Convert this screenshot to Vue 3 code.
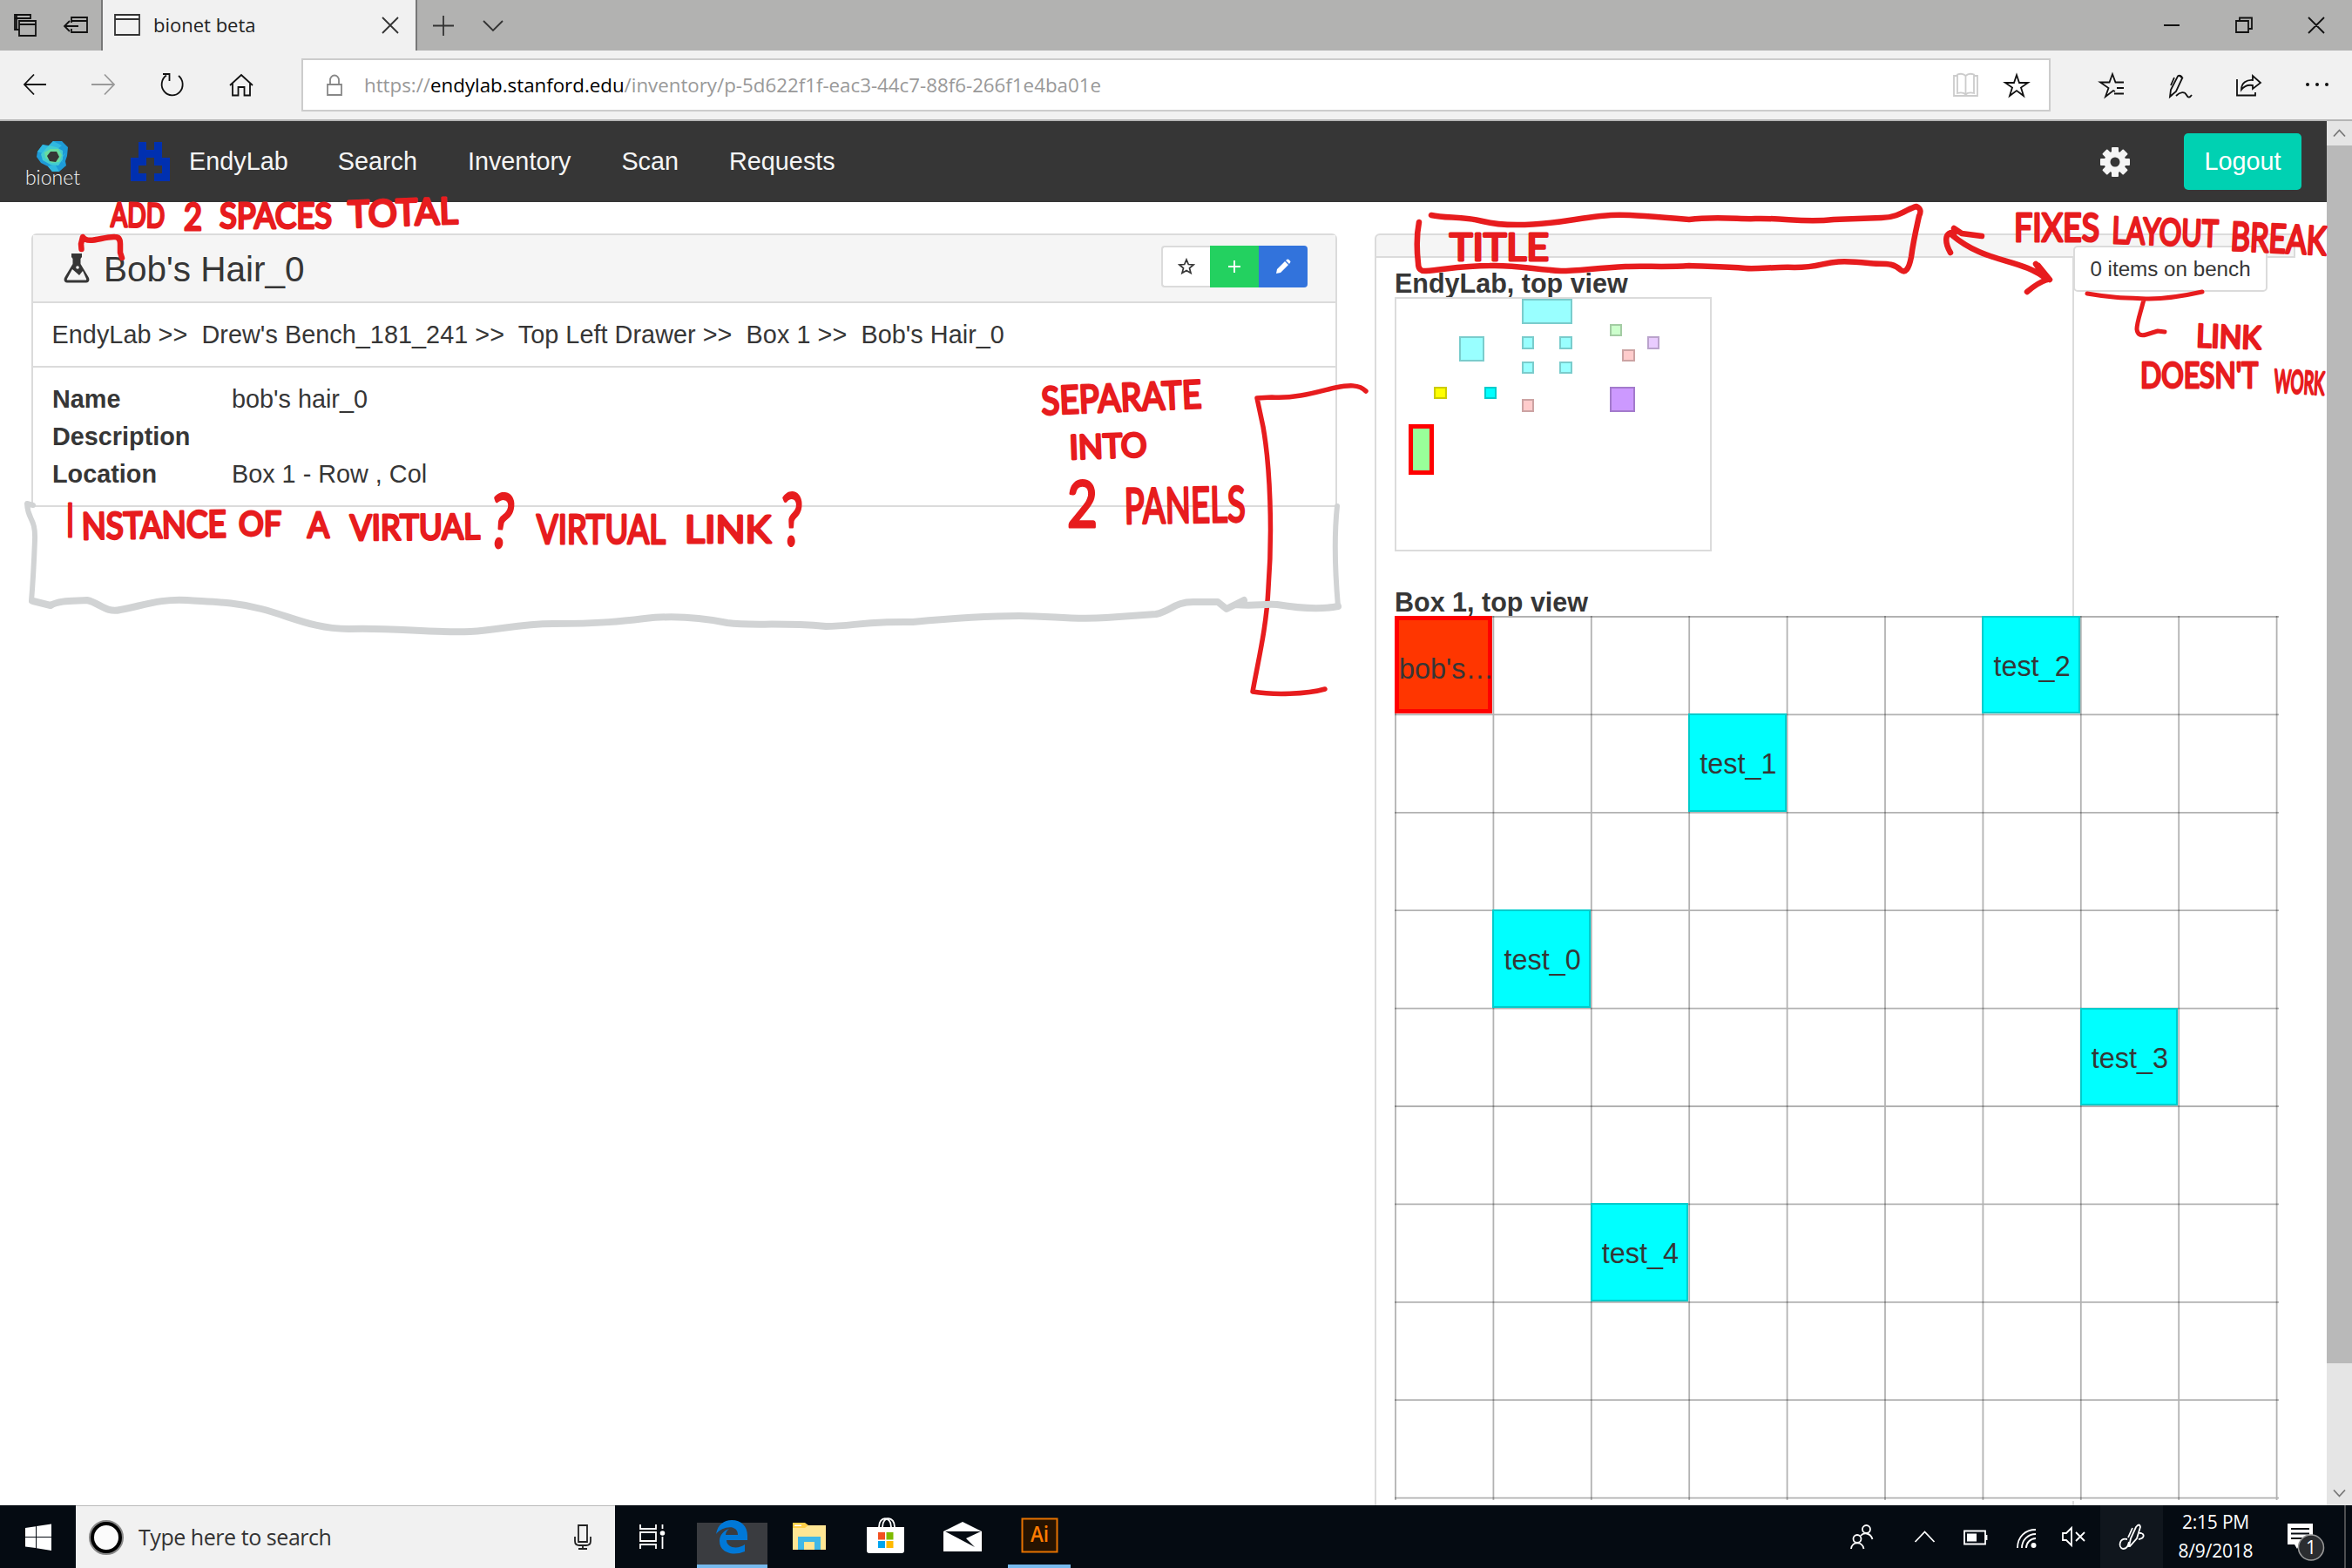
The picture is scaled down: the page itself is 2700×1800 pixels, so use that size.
<script setup>
const navLinks = ['Search', 'Inventory', 'Scan', 'Requests']

const crumbs = ['EndyLab', "Drew's Bench_181_241", 'Top Left Drawer', 'Box 1', "Bob's Hair_0"]

const details = [
  { label: 'Name', value: "bob's hair_0" },
  { label: 'Description', value: '' },
  { label: 'Location', value: 'Box 1 - Row , Col' }
]

const identicon = [[1, 0], [3, 0], [1, 1], [2, 1], [3, 1], [0, 2], [1, 2], [3, 2], [4, 2], [0, 3], [4, 3], [0, 4], [1, 4], [3, 4], [4, 4]]

// Lab floor plan, in 14.4px units
const labItems = [
  { x: 10, y: 0, w: 4, h: 2, c: '#99ffff' },
  { x: 5, y: 3, w: 2, h: 2, c: '#99ffff' },
  { x: 10, y: 3, w: 1, h: 1, c: '#99ffff' },
  { x: 13, y: 3, w: 1, h: 1, c: '#99ffff' },
  { x: 10, y: 5, w: 1, h: 1, c: '#99ffff' },
  { x: 13, y: 5, w: 1, h: 1, c: '#99ffff' },
  { x: 17, y: 2, w: 1, h: 1, c: '#ccffcc' },
  { x: 20, y: 3, w: 1, h: 1, c: '#e9ccff' },
  { x: 18, y: 4, w: 1, h: 1, c: '#ffcccc' },
  { x: 3, y: 7, w: 1, h: 1, c: '#ffff00' },
  { x: 7, y: 7, w: 1, h: 1, c: '#00ffff' },
  { x: 10, y: 8, w: 1, h: 1, c: '#ffcccc' },
  { x: 17, y: 7, w: 2, h: 2, c: '#cc99ff' },
  { x: 1, y: 10, w: 2, h: 4, c: '#99ff99', selected: true }
]

const boxItems = [
  { name: "bob's…", col: 1, row: 1, selected: true },
  { name: 'test_2', col: 7, row: 1 },
  { name: 'test_1', col: 4, row: 2 },
  { name: 'test_0', col: 2, row: 4 },
  { name: 'test_3', col: 8, row: 5 },
  { name: 'test_4', col: 3, row: 7 }
]

const lines = Array.from({ length: 10 }, (_, i) => i * 112.4 + 1)

// Reviewer notes: x, baseline, width, size, tilt
const notes = [
  { t: 'ADD', x: 127, y: 260, w: 62, s: 38, r: 1 },
  { t: '2', x: 211, y: 264, w: 21, s: 42, r: 0 },
  { t: 'SPACES', x: 252, y: 262, w: 129, s: 40, r: 0 },
  { t: 'TOTAL', x: 400, y: 261, w: 126, s: 42, r: -2 },
  { t: 'I', x: 76, y: 616, w: 9, s: 52, r: 0 },
  { t: 'NSTANCE', x: 94, y: 619, w: 166, s: 42, r: -1 },
  { t: 'OF', x: 274, y: 615, w: 49, s: 38, r: 0 },
  { t: 'A', x: 353, y: 617, w: 25, s: 41, r: 0 },
  { t: 'VIRTUAL', x: 402, y: 620, w: 149, s: 40, r: -0.5 },
  { t: '?', x: 560, y: 627, w: 27, s: 86, r: 6 },
  { t: 'VIRTUAL', x: 616, y: 624, w: 148, s: 46, r: 0 },
  { t: 'LINK', x: 786, y: 623, w: 99, s: 43, r: 0 },
  { t: '?', x: 897, y: 626, w: 25, s: 84, r: 0 },
  { t: 'SEPARATE', x: 1196, y: 476, w: 184, s: 44, r: -2.5 },
  { t: 'INTO', x: 1228, y: 527, w: 89, s: 38, r: -2 },
  { t: '2', x: 1225, y: 605, w: 35, s: 74, r: 0 },
  { t: 'PANELS', x: 1291, y: 601, w: 139, s: 56, r: -1 },
  { t: 'TITLE', x: 1664, y: 299, w: 114, s: 42, r: 0 },
  { t: 'FIXES', x: 2312, y: 277, w: 98, s: 44, r: 0 },
  { t: 'LAYOUT', x: 2424, y: 279, w: 122, s: 42, r: 2 },
  { t: 'BREAK', x: 2560, y: 287, w: 110, s: 45, r: 3 },
  { t: 'LINK', x: 2521, y: 398, w: 74, s: 36, r: 2 },
  { t: "DOESN'T", x: 2457, y: 445, w: 135, s: 40, r: 0 },
  { t: 'WORK', x: 2610, y: 450, w: 58, s: 36, r: 3 }
]
</script>

<template>
  <div class="screen">
    <header class="tabs">
      <div class="tab-tools">
        <svg width="117" height="58" viewBox="0 0 117 58" class="ln dark">
          <path d="M22 34H17V17H35V22M17 21H35M19 34V17M22 34V24H41V41H22ZM22 28H41" />
          <path d="M82 26V20H100V37H82V33M82 24H100M74 30H90M80 24L74 30L80 36" />
        </svg>
      </div>
      <div class="tab">
        <svg width="30" height="26" viewBox="0 0 30 26" class="ln"><path d="M1 1H29V24H1ZM1 6H29" /></svg>
        <span class="tab-title">bionet beta</span>
        <svg width="20" height="20" viewBox="0 0 20 20" class="ln"><path d="M1 1L19 19M19 1L1 19" /></svg>
      </div>
      <svg class="ln tab-new" width="100" height="58" viewBox="0 0 100 58"><path d="M18 29.500H42M30 18V41M76 24L87 35L98 24" /></svg>
      <svg class="ln dark win" width="200" height="58" viewBox="0 0 200 58">
        <path d="M0 29H18M83 24H97V37H83ZM87 24V20.500H101V33H97M166 20L184 38M184 20L166 38" />
      </svg>
    </header>

    <div class="toolbar">
      <svg class="ln nav-icons" width="346" height="77" viewBox="0 0 346 77">
        <path class="dark" d="M28 38H53M39 26.500L28 38L39 49.500" />
        <path stroke="#999" d="M105 38H131M120 26.500L131 38L120 49.500" />
        <path class="dark" d="M191 27.500A12 12.500 0 1 0 205 28M187 26H194.500V34" />
        <path class="dark" d="M264 39L277 27L290 39M267 37V50.500H273.500V41H280.500V50.500H287V37" />
      </svg>
      <div class="address">
        <svg class="ln lock" width="20" height="26" viewBox="0 0 20 26"><path stroke="#888" d="M2 12H18V24H2ZM5 12V7A5 5.500 0 0 1 15 7V12" /></svg>
        <div class="url"><span class="scheme">https://</span><span class="host">endylab.stanford.edu</span><span class="path">/inventory/p-5d622f1f-eac3-44c7-88f6-266f1e4ba01e</span></div>
        <svg class="ln" width="90" height="30" viewBox="0 0 90 30">
          <path stroke="#ccc" d="M5 4H1V27H28V4H24M14.500 4C12 1.500 8 1.500 5 2.500V24C9 23 12 23 14.500 25.500C17 23 20 23 24 24V2.500C21 1.500 17 1.500 14.500 4V25" />
          <path class="dark" d="M73 3L76 12H86L78 17.500L81 27L73 21L65 27L68 17.500L60 12H70Z" />
        </svg>
      </div>
      <svg class="ln dark tools" width="290" height="77" viewBox="0 0 290 77">
        <path d="M74 46L72 45L63 52L66.500 42L57 35.500H67.500L71 26L74.500 35.500H84M76 42H84M73 48.500H84" />
        <path d="M140 49.500L137 52L138 44L146 28.500A3 3 0 0 1 151 31L144 46L138 51M148 28L152 31M142 30L138 39M144 51C149 46 154 46 156 50S160 53 162 50" />
        <path d="M214 32V50.500H235V47M219 44C219 36 225 32.500 232 33V28L241 36L232 43V39C226 38 222 40 219 44Z" />
      </svg>
      <div class="dots"><i></i><i></i><i></i></div>
    </div>

    <main class="viewport">
      <div class="page">
        <nav class="navbar">
          <div class="brand">
            <svg width="38" height="37" viewBox="0 0 38 37">
              <path fill="#1e9bd8" d="M2 13L8 5L15 6L20 1L30 1L37 8L36 18L34 24L35 29L27 36L19 36L14 30L6 26L1 19Z" />
              <path fill="#30b8e0" d="M8 5L18 8L11 16L2 13ZM20 1L30 6L24 11L15 6ZM14 30L22 27L27 36L19 36ZM35 14L29 22L34 28L27 21Z" />
              <path fill="#43ccd0" d="M15 6L24 8L31 12L31 22L26 29L17 28L8 23L6 16Z" />
              <path fill="#67dca0" d="M17 10L26 10L30 17L27 25L18 26L11 20L10 14Z" />
              <path fill="#363636" d="M17 13L24 13L27 19L23 25L16 24L13 18Z" />
            </svg>
            <span>bionet</span>
          </div>
          <svg class="identicon" width="45" height="45" viewBox="0 0 5 5" shape-rendering="crispEdges">
            <rect v-for="([x, y], i) in identicon" :key="i" :x="x" :y="y" width="1" height="1" fill="#0030b0" />
          </svg>
          <a class="lab">EndyLab</a>
          <a v-for="l in navLinks" :key="l">{{ l }}</a>
          <svg class="gear" width="36" height="36" viewBox="-18 -18 36 36">
            <g fill="#f5f5f5">
              <rect v-for="a in 4" :key="a" x="-4" y="-17" width="8" height="34" rx="1" :transform="`rotate(${a * 45})`" />
              <circle r="12.500" />
            </g>
            <circle r="5.500" fill="#363636" />
          </svg>
          <button class="logout">Logout</button>
        </nav>

        <div class="columns">
          <section class="panel item">
            <div class="heading">
              <svg class="flask" width="30" height="35" viewBox="0 0 30 35">
                <path fill="#363636" d="M9 1H21V5L19.500 7V13L28.500 28C30.500 31.500 29 34.500 26 34.500H4C1 34.500 -.5 31.500 1.500 28L10.500 13V7L9 5Z" />
                <path fill="#f5f5f5" d="M10 19L18 26L22 21L26 30C26.500 31 26 31.500 25 31.500H5C4 31.500 3.500 31 4 30Z" />
                <circle cx="16" cy="17" r="1.800" fill="#f5f5f5" />
              </svg>
              <h1>Bob's Hair_0</h1>
              <div class="actions">
                <button class="b-star"><svg width="20" height="20" viewBox="0 0 20 20"><path d="M10 2L12.300 7.500L18 8L13.500 11.800L15 17.500L10 14.500L5 17.500L6.500 11.800L2 8L7.700 7.500Z" fill="none" stroke="#363636" stroke-width="1.700" /></svg></button>
                <button class="b-add"><svg width="14" height="14" viewBox="0 0 14 14"><path d="M7 0V14M0 7H14" stroke="#fff" stroke-width="2" /></svg></button>
                <button class="b-edit"><svg width="18" height="18" viewBox="0 0 18 18"><path fill="#fff" d="M1 17L2 12L11 3L15 7L6 16ZM12 2L13.500 .8Q14.500 0 15.500 1L17 2.500Q18 3.500 17 4.500L16 6Z" /></svg></button>
              </div>
            </div>
            <div class="crumbs"><template v-for="(c, i) in crumbs" :key="c">{{ c }}<template v-if="i < 4"> &gt;&gt;&nbsp; </template></template></div>
            <dl class="details">
              <div v-for="d in details" :key="d.label"><dt>{{ d.label }}</dt><dd>{{ d.value }}</dd></div>
            </dl>
          </section>

          <section class="map">
            <div class="map-head"></div>
            <div class="map-body">
              <h2>EndyLab, top view</h2>
              <div class="lab-map">
                <i v-for="(m, i) in labItems" :key="i" :class="{ selected: m.selected }"
                  :style="{ left: m.x * 14.4 + 'px', top: m.y * 14.4 + 'px', width: m.w * 14.4 + 'px', height: m.h * 14.4 + 'px', background: m.c }"></i>
              </div>
              <h2 class="second">Box 1, top view</h2>
              <div class="box">
                <svg class="lines" width="1016" height="1016">
                  <g stroke="#000" stroke-opacity=".3" stroke-width="1.800">
                    <path v-for="p in lines" :key="p" :d="`M0 ${p}H1015M${p} 0V1015`" />
                  </g>
                </svg>
                <div v-for="b in boxItems" :key="b.name" class="cell" :class="{ selected: b.selected }"
                  :style="{ gridColumn: b.col, gridRow: b.row }">{{ b.name }}</div>
              </div>
            </div>
            <button class="bench">0 items on bench</button>
          </section>
        </div>
      </div>
      <div class="scroll">
        <svg class="ln" width="29" height="28" viewBox="0 0 29 28"><path stroke="#777" d="M8 17.500L14.500 10.500L21 17.500" /></svg>
        <div class="thumb"></div>
        <svg class="ln down" width="29" height="28" viewBox="0 0 29 28"><path stroke="#777" d="M8 10.500L14.500 17.500L21 10.500" /></svg>
      </div>
    </main>

    <footer class="taskbar">
      <div class="start"><svg width="30" height="31" viewBox="0 0 30 31"><path fill="#fff" d="M0 5L12 3.200V15H0ZM13 3L30 .5V15H13ZM0 16H12V28L0 26.500ZM13 16H30V31L13 28.200Z" /></svg></div>
      <div class="search">
        <svg width="42" height="42" viewBox="0 0 42 42"><circle cx="21" cy="21" r="17" fill="none" stroke="#888" stroke-width="6" /><circle cx="21" cy="21" r="16" fill="#fbfbfb" stroke="#000" stroke-width="4" /></svg>
        <span>Type here to search</span>
        <svg class="ln mic" width="22" height="31" viewBox="0 0 22 31"><path stroke="#222" d="M6 2H16V21H6ZM2 15V20Q2 25 7 25H15Q20 25 20 20V15M11 25V29M6 29H16" /></svg>
      </div>
      <svg class="apps" width="560" height="72" viewBox="706 1728 560 72">
        <g fill="none" stroke="#fff" stroke-width="1.800"><path d="M735 1750V1755H753V1750M735 1759H753V1769H735ZM735 1778V1773H753V1778M760.500 1750V1755M760.500 1764V1778" /></g>
        <circle cx="760.500" cy="1760" r="2.800" fill="#fff" />
        <path fill="#3a3c40" d="M800 1748H881V1796H800Z" />
        <path fill="#76b9ed" d="M800 1796H881V1800H800ZM1157 1796H1229V1800H1157Z" />
        <path fill="#0078d7" d="M822 1761C824 1750 831 1745 840 1745C851 1745 858 1752 858 1763V1768H834C834 1777 847 1779 855 1773V1781C841 1787 826 1782 826 1769C826 1762 831 1757 837 1755C834 1757 833 1760 833 1762H847C847 1749 829 1752 822 1761Z" />
        <path fill="#ffe694" d="M910 1751H948V1779H910Z" /><path fill="#ffcf48" d="M910 1748H924L928 1751L924 1754H910Z" />
        <path fill="#40b8e8" d="M916 1764H942V1779H935V1770H923V1779H916Z" /><path fill="#fff" d="M912 1750.500H920V1752H912Z" />
        <path fill="none" stroke="#fff" stroke-width="1.800" d="M1009 1753C1009 1740 1023 1740 1023 1753M1013 1753C1013 1740 1027 1740 1027 1753" />
        <path fill="#fff" d="M995 1753H1038V1780Q1038 1783 1035 1783H998Q995 1783 995 1780Z" />
        <path fill="#f25022" d="M1008 1759H1016V1767.500H1008Z" /><path fill="#7fba00" d="M1017.500 1759H1025.500V1767.500H1017.500Z" />
        <path fill="#00a4ef" d="M1008 1769H1016V1777H1008Z" /><path fill="#ffb900" d="M1017.500 1769H1025.500V1777H1017.500Z" />
        <path fill="#fff" d="M1083 1758L1105 1747L1127 1758V1781H1083Z" /><path fill="#050b12" d="M1085 1758H1126L1109 1766L1119 1776Z" />
        <rect x="1173.500" y="1743.500" width="40" height="38" fill="#261300" stroke="#e67300" stroke-width="2" />
        <text x="1183" y="1770" fill="#ff7c00" font-family="Open Sans, sans-serif" font-size="25" font-weight="600" textLength="21" lengthAdjust="spacingAndGlyphs">Ai</text>
      </svg>
      <svg class="tray" width="390" height="72" viewBox="2110 1728 390 72">
        <path fill="#10161d" d="M2411 1728H2483V1800H2411Z" />
        <g fill="none" stroke="#fff" stroke-width="1.800">
          <circle cx="2142.500" cy="1755.500" r="4.500" /><circle cx="2132" cy="1766.500" r="4.500" />
          <path d="M2136 1763C2139 1759 2147 1759 2149.500 1767M2125 1778C2126 1769 2138 1769 2139.500 1778" />
          <path d="M2198.500 1770L2209.500 1758.500L2220.500 1770" />
          <path d="M2255 1757.500H2279V1772.500H2255ZM2280.500 1762V1768" />
          <path d="M2316 1777C2316 1764 2325 1756 2337 1756M2321 1777C2321 1768 2328 1761 2337 1761M2326 1777C2326 1771 2331 1766 2337 1766" />
          <path d="M2368 1760H2372L2378 1754V1774L2372 1768H2368ZM2383 1759L2393 1769M2393 1759L2383 1769" />
          <path d="M2444 1775L2446 1766L2452 1753Q2456 1748 2457 1753L2453 1766L2445 1775ZM2448 1754L2443 1765M2442 1767C2433 1765 2431 1776 2437 1778C2442 1778 2443 1774 2444 1770M2456 1760H2458C2462 1761 2462 1766 2455 1767" />
        </g>
        <path fill="#fff" d="M2258 1760.500H2269V1769.500H2258Z" /><circle cx="2334.500" cy="1774" r="3" fill="#fff" />
      </svg>
      <div class="clock"><span>2:15 PM</span><span>8/9/2018</span></div>
      <svg class="notif" width="80" height="72" viewBox="2620 1728 80 72">
        <path fill="#fff" d="M2626 1749H2655V1773H2640L2637 1778L2634 1773H2626Z" />
        <path stroke="#050b12" stroke-width="2" d="M2630 1755H2651M2630 1760.500H2651M2630 1766H2645" />
        <circle cx="2653" cy="1776.500" r="14.500" fill="#2b2d30" stroke="#999" stroke-width="1.500" />
        <text x="2653" y="1784" text-anchor="middle" fill="#fff" font-family="Open Sans, sans-serif" font-size="21">1</text>
        <path stroke="#666" stroke-width="1.500" d="M2692 1728V1800" />
      </svg>
    </footer>

    <!-- Ink layer over the page -->
    <svg class="ink" width="2700" height="1800" viewBox="0 0 2700 1800">
      <g fill="none" stroke="#e71c1e" stroke-width="6.500" stroke-linecap="round" stroke-linejoin="round">
        <path d="M93.500 286L93 280L95 272C101 281 119 271 132 272Q138 272 138 280V290L140 296" />
        <path stroke-width="5.500" d="M1568 449C1560 441 1548 442 1533 445S1490 458 1460 456L1443 457L1450 490C1458 535 1461 610 1456 675C1454 720 1444 760 1438 794C1462 798 1500 797 1521 791" />
        <path d="M1643 247C1660 251 1678 248 1702 254S1764 259 1808 252S1857 245 1939 252C1970 248 2000 252 2015 251C2050 250 2070 256 2105 252L2160 250C2180 250 2190 239 2200 237Q2207 240 2203 248C2198 270 2196 280 2194 295Q2190 316 2182 310C2172 300 2160 304 2145 302C2090 296 2100 307 2060 307C2040 306 2020 309 2004 308C1980 306 1960 306 1939 305C1910 307 1890 305 1866 306C1830 308 1810 311 1792 311C1760 309 1740 304 1710 305C1680 305 1660 309 1637 311Q1628 312 1628 302Q1625 275 1629 255" />
        <path d="M2239 290C2232 278 2232 265 2244 267L2241 270C2280 303 2320 296 2350 321L2337 303M2350 321Q2340 324 2327 335M2243 262L2252 268L2275 271M2340 305L2353 321" />
        <path stroke-width="5" d="M2396 337C2425 342 2440 342 2467 343C2490 343 2510 339 2528 335M2461 344C2457 360 2453 370 2453 378Q2454 387 2464 384L2477 380L2485 381" />
      </g>
      <g fill="none" stroke="#d1d3d4" stroke-width="6" stroke-linejoin="round" stroke-linecap="round">
        <path d="M38 580L31 578C32 598 41 594 40 620S38 666 36 690M1535 581C1532 610 1532 650 1536 696" />
        <path stroke-width="8" d="M38 690L58 695C68 689 84 690 100 689C114 692 122 704 138 700C165 695 185 687 215 689S270 691 300 699C335 708 360 722 400 722C450 720 495 727 540 725C575 723 595 716 635 716C690 716 715 713 740 710C775 706 805 709 835 715C865 719 890 714 948 719C980 719 990 713 1048 714C1090 710 1130 707 1170 707S1230 712 1270 709L1327 705C1345 701 1348 691 1370 691H1398L1408 699L1428 689L1418 694C1440 696 1450 693 1466 694C1490 698 1515 700 1536 696" />
      </g>
      <g class="notes">
        <text v-for="(n, i) in notes" :key="i" :x="n.x" :y="n.y" :font-size="n.s" :textLength="n.w"
          lengthAdjust="spacingAndGlyphs" :transform="`rotate(${n.r} ${n.x} ${n.y})`">{{ n.t }}</text>
      </g>
    </svg>
  </div>
</template>

<style>
body { margin: 0; overflow: hidden; }
</style>

<style scoped>
* { box-sizing: border-box; }
.screen {
  position: relative; width: 2700px; height: 1800px; overflow: hidden;
  display: flex; flex-direction: column; background: #fff; color: #363636;
  font-family: "Liberation Sans", Arial, sans-serif; font-size: 28.8px;
}
svg { display: block; flex: none; }
button { font: inherit; padding: 0; display: flex; align-items: center; justify-content: center; }
.ln { fill: none; stroke: #333; stroke-width: 1.8; }
.dark { stroke: #111; }

.tabs { height: 58px; display: flex; background: #b2b2b1; flex: none; }
.tab-tools { width: 116px; }
.tab {
  width: 363px; background: #f1f1f1; border-left: 2px solid #777; border-right: 2px solid #777;
  display: flex; align-items: center; padding: 0 19px 0 13px;
  font-family: "Open Sans", "Noto Sans", sans-serif; font-size: 22px; color: #222;
}
.tab-title { margin: -2px 0 0 15px; flex: 1; }
.win { margin-left: auto; width: 216px; overflow: visible; }
.win path { transform: translateX(-8px); }

.toolbar { height: 81px; flex: none; display: flex; background: #f1f1f1; border-bottom: 2px solid #b5b5b5; }
.address {
  width: 2008px; height: 61px; margin-top: 9px; background: #fff; border: 2px solid #ccc;
  display: flex; align-items: center; padding: 0 20px 0 26px;
}
.url {
  flex: 1; margin-left: 24px; color: #999; white-space: nowrap;
  font-family: "Open Sans", "Noto Sans", sans-serif; font-size: 22.3px;
}
.host { color: #000; }
.nav-icons { margin-top: 1px; }
.tools { margin-top: 1px; }
.dots { display: flex; gap: 7px; align-items: center; height: 77px; margin-left: 3px; }
.dots i { width: 4px; height: 4px; border-radius: 2px; background: #111; }

.viewport { height: 1589px; flex: none; display: flex; }
.page { width: 2671px; height: 1589px; overflow: hidden; }
.navbar { height: 93px; background: #363636; color: #f5f5f5; display: flex; align-items: center; padding-left: 28px; }
.brand { width: 65px; display: flex; flex-direction: column; align-items: center; font-family: Lato, sans-serif; font-weight: 300; font-size: 23px; line-height: 18px; margin-top: 1px; }
.brand svg { margin-left: -1px; }
.brand span { margin-top: -4px; }
.identicon { margin-left: 57px; }
.navbar a { margin-right: 58px; }
.navbar .lab { margin-left: 22px; margin-right: 57px; }
.gear { margin-left: auto; }
.logout { width: 135px; height: 65px; border: 0; border-radius: 5px; background: #00d1b2; color: #fff; margin: 0 29px 0 61px; }

.columns { display: flex; padding: 36px 36px 0; gap: 43px; align-items: flex-start; }
.panel { width: 1499px; border: 2px solid #dbdbdb; border-radius: 6px 6px 0 0; }
.heading { height: 78px; background: #f5f5f5; border-bottom: 2px solid #dbdbdb; display: flex; align-items: center; padding: 0 32px 0 35px; }
.flask { margin-top: -1px; }
h1 { font-size: 40.5px; font-weight: 400; margin: 1px auto 0 16px; line-height: 50px; }
.actions { display: flex; margin-top: -4px; }
.actions button { width: 56px; height: 48px; border: 0; }
.actions .b-star { background: #fff; border: 2px solid #dbdbdb; border-right: 0; border-radius: 4px 0 0 4px; }
.actions .b-add { background: #23d160; }
.actions .b-edit { background: #3273dc; border-radius: 0 4px 4px 0; }
.crumbs { height: 74px; border-bottom: 2px solid #dbdbdb; padding: 15px 0 0 21.5px; line-height: 43.2px; white-space: nowrap; letter-spacing: .05px; }
.details { margin: 0; padding: 15px 0 0 22px; height: 158px; }
.details div { display: flex; height: 43.2px; line-height: 43.2px; }
dt { width: 206px; font-weight: 700; }
dd { margin: 0; }

.map { position: relative; width: 1057px; height: 1470px; flex: none; }
.map-head { height: 28px; background: #f5f5f5; border: 2px solid #dbdbdb; border-radius: 6px 0 0 0; }
.map-body { width: 803px; height: 1450px; border-left: 2px solid #dbdbdb; border-right: 2px solid #dbdbdb; padding: 12px 0 0 21px; }
h2 { margin: 0; font-size: 30.5px; line-height: 34px; height: 33px; white-space: nowrap; }
.second { margin-top: 41px; }
.lab-map { position: relative; width: 364px; height: 292px; border: 2px solid #dbdbdb; }
.lab-map i { position: absolute; border: 2px solid rgba(0, 0, 0, .2); }
.lab-map i.selected { border: 5px solid #f00; }
.box {
  position: relative; width: 1016px; height: 1016px; background: #fff; display: grid;
  grid-template-columns: repeat(9, 112.4px); grid-template-rows: repeat(9, 112.4px);
}
.lines { position: absolute; left: 0; top: 0; }
.cell {
  position: relative; background: #0ff; border: 2px solid #00cccc; font-size: 32.4px; line-height: 112px;
  text-align: center; white-space: nowrap; text-indent: 2px;
}
.cell.selected { background: #ff3600; border: 5px solid #f00; text-align: left; text-indent: 0; line-height: 113px; width: 112px; }
.bench {
  position: absolute; left: 802px; top: 14px; width: 223px; height: 53px; background: #fff; color: #363636;
  border: 2px solid #dbdbdb; border-radius: 5px; font-size: 24.2px;
}
.scroll { width: 29px; background: #e5e5e5; display: flex; flex-direction: column; }
.thumb { height: 1398px; background: #b9b9b9; }
.down { margin-top: auto; }

.taskbar { height: 72px; flex: none; background: #050b12; display: flex; color: #fff; font-family: "Open Sans", "Noto Sans", sans-serif; }
.start { width: 87px; display: flex; align-items: center; padding-left: 29px; }
.search { width: 619px; background: #f1f1f1; border-top: 1px solid #bbb; display: flex; align-items: center; padding: 0 26px 0 14px; color: #333; font-size: 25px; letter-spacing: -.45px; }
.search span { flex: 1; margin: -2px 0 0 16px; }
.tray { margin-left: 844px; }
.clock { width: 87px; display: flex; flex-direction: column; align-items: center; font-size: 21px; line-height: 33px; padding-top: 3px; letter-spacing: -.2px; }
.notif { margin-left: 33px; }

.ink { position: absolute; left: 0; top: 0; pointer-events: none; }
.notes { font-family: Lato, "Open Sans", sans-serif; font-weight: 400; fill: #e71c1e; stroke: #e71c1e; stroke-width: 3; stroke-linejoin: round; }
</style>
